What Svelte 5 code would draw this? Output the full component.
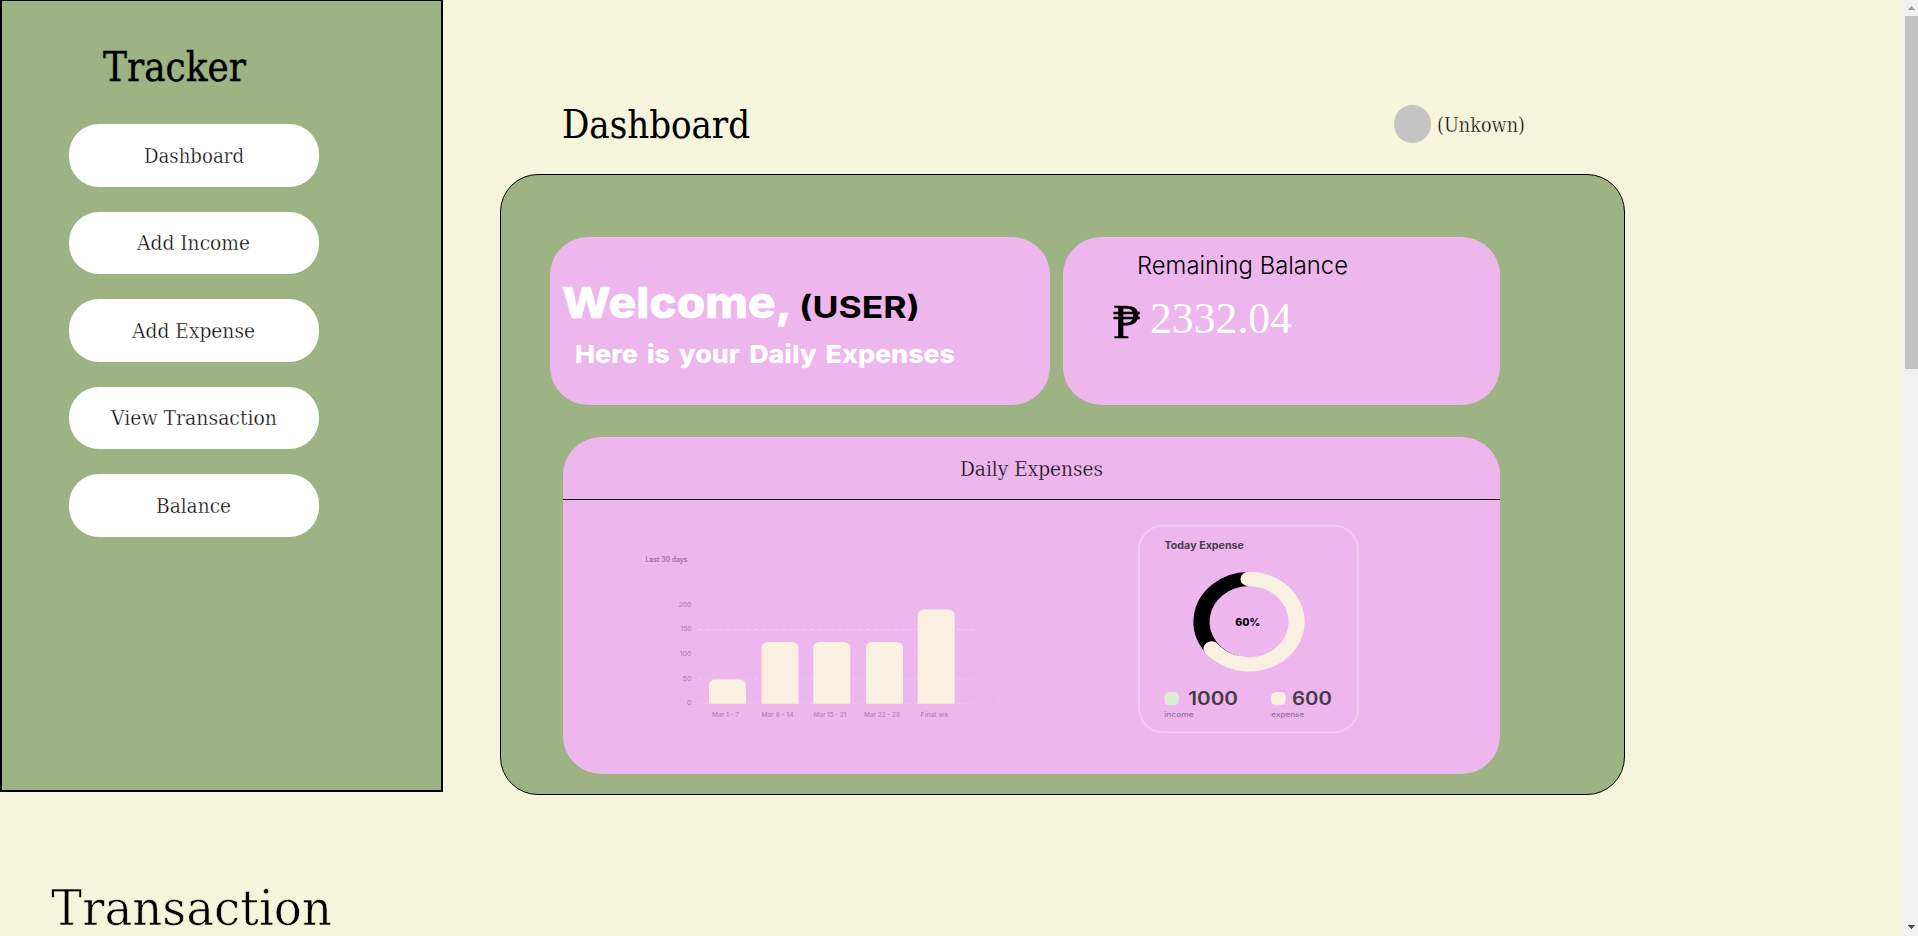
<script>
  const menu = [
    { label: 'Dashboard', width: 100 },
    { label: 'Add Income', width: 113 },
    { label: 'Add Expense', width: 123 },
    { label: 'View Transaction', width: 166 },
    { label: 'Balance', width: 75 }
  ];
  const bars = [
    { label: 'Mar 1 - 7', x: 109, top: 79.5, cx: 125.5, w: 27 },
    { label: 'Mar 8 - 14', x: 161.5, top: 42, cx: 177.5, w: 32 },
    { label: 'Mar 15 - 21', x: 213.3, top: 42, cx: 230, w: 33 },
    { label: 'Mar 22 - 28', x: 266, top: 42, cx: 282, w: 36 },
    { label: 'Final wk', x: 317.7, top: 9.5, cx: 334.5, w: 28 }
  ];
  const ticks = [
    { value: 200, y: 5.5, w: 13, o: 0.12 },
    { value: 150, y: 29.5, w: 11, o: 0.6 },
    { value: 100, y: 54.5, w: 12, o: 0.25 },
    { value: 50, y: 79, w: 9, o: 0.4 },
    { value: 0, y: 103.5, w: 4.5, o: 0.3 }
  ];
</script>

{#snippet line(text, width, size, kind)}
  <svg class="line {kind}" {width} height={size} font-size={size} role="img" aria-label={text}>
    <text x="0" y={size * 0.8} textLength={width} lengthAdjust="spacingAndGlyphs">{text}</text>
  </svg>
{/snippet}

<div class="page">
  <div class="top">
    <aside class="sidebar">
      <h1>{@render line('Tracker', 143, 41, 'slab strong')}</h1>
      <nav>
        {#each menu as item}
          <button>{@render line(item.label, item.width, 19.5, 'slab light on-white')}</button>
        {/each}
      </nav>
    </aside>

    <main>
      <header>
        <h2>{@render line('Dashboard', 188, 39, 'slab mid')}</h2>
        <div class="user">
          <span class="avatar"></span>
          {@render line('(Unkown)', 88, 19.5, 'slab light on-cream')}
        </div>
      </header>

      <section class="board">
        <div class="cards">
          <div class="card welcome">
            <div class="greeting">
              {@render line('Welcome,', 230, 43, 'wide white heavy')}
              {@render line('(USER)', 121, 30, 'wide bold')}
            </div>
            {@render line('Here is your Daily Expenses', 380, 24.5, 'wide white spaced')}
          </div>
          <div class="card balance">
            {@render line('Remaining Balance', 211, 24, 'thin')}
            <div class="amount">
              {@render line('₱', 27, 49, 'peso')}
              {@render line('2332.04', 142, 45, 'times white')}
            </div>
          </div>
        </div>

        <div class="daily">
          <div class="daily-head">{@render line('Daily Expenses', 143, 19.5, 'slab light on-pink')}</div>
          <div class="charts">
            <svg class="bars" width="400" height="190" viewBox="0 -60 400 190">
              <text class="caption" x="45.5" y="-38" textLength="42" lengthAdjust="spacingAndGlyphs">Last 30 days</text>
              {#each ticks as t}
                <text class="tick" x="91.5" y={t.y + 1.7} text-anchor="end" textLength={t.w} lengthAdjust="spacingAndGlyphs">{t.value}</text>
                <line x1="98" x2="378" y1={t.y} y2={t.y} opacity={t.o} />
              {/each}
              {#each bars as b}
                <path class="bar" d="M{b.x} 103.7V{b.top + 6.5}q0-6.5 6.5-6.5h24q6.5 0 6.5 6.5V103.7z" />
                <text class="tick" x={b.cx} y="117" text-anchor="middle" textLength={b.w} lengthAdjust="spacingAndGlyphs">{b.label}</text>
              {/each}
              <path class="edge" d="M26 99q3 13 17 18M399 95q-2 18-22 24" />
            </svg>

            <svg class="donut" width="221" height="208" viewBox="1138.5 525 221 208">
              <rect class="frame" x="1139.5" y="525.8" width="219" height="206.5" rx="24" />
              <text class="title" x="1165" y="548.6" textLength="79.5" lengthAdjust="spacingAndGlyphs">Today Expense</text>
              <g transform="translate(1249 621.7) scale(1.12 1)">
                <path class="ring income" d="M0-42.8A42.8 42.8 0 0 0-10 41.4" />
                <path class="ring expense" d="M0-42.7A42.7 42.7 0 1 1-33 26.8" />
              </g>
              <text class="percent" x="1235.7" y="625.6" textLength="25" lengthAdjust="spacingAndGlyphs">60%</text>
              <rect class="green" x="1165" y="692" width="14.3" height="13.2" rx="4.5" />
              <text class="sum" x="1188.8" y="705" textLength="49.7" lengthAdjust="spacingAndGlyphs">1000</text>
              <text class="name" x="1164.7" y="717.4" textLength="29.6" lengthAdjust="spacingAndGlyphs">income</text>
              <rect class="sand" x="1271.8" y="692" width="14.3" height="13.2" rx="4.5" />
              <text class="sum" x="1292.5" y="705" textLength="39.8" lengthAdjust="spacingAndGlyphs">600</text>
              <text class="name" x="1271.8" y="717.4" textLength="33" lengthAdjust="spacingAndGlyphs">expense</text>
            </svg>
          </div>
        </div>
      </section>
    </main>
  </div>

  <h2 class="transaction">{@render line('Transaction', 281, 49, 'slab thin-slab')}</h2>

  <div class="scroll">
    <svg width="7" height="4"><path d="M3 0h1v1h1v1h1v1h1v1H0V3h1V2h1V1h1z" fill="#a3a3a3" /></svg>
    <div class="thumb"></div>
    <svg class="down" width="7" height="4"><path d="M0 0h7v1H6v1H5v1H4v1H3V3H2V2H1V1H0z" fill="#505050" /></svg>
  </div>
</div>

<style>
  :global(body) { margin: 0; background: #f5f5dc; overflow: hidden; }
  .page { position: relative; width: 1918px; height: 936px; overflow: hidden; background: #f5f5dc; color: #000; }
  h1, h2 { margin: 0; font-weight: 400; display: flex; }
  .top { display: flex; height: 795px; }

  .line { display: block; overflow: visible; flex: none; }
  .slab { font-family: "Roboto Slab", "DejaVu Serif Condensed", "DejaVu Serif", serif; font-weight: 400; }
  .strong { stroke: #000; stroke-width: 0.4px; }
  .mid { stroke: #000; stroke-width: 0.1px; }
  .thin-slab { stroke: #f5f5dc; stroke-width: 0.6px; }
  .light { stroke-width: 0.33px; }
  .on-white { stroke: #fff; }
  .on-cream { stroke: #f5f5dc; }
  .on-pink { stroke: #edb7ed; }
  .wide { font-family: Inter, sans-serif; font-weight: 800; }
  .heavy { stroke: #fff; stroke-width: 0.6px; }
  .bold { font-weight: 700; }
  .spaced { word-spacing: 3px; }
  .white { fill: #fff; }
  .thin { font-family: Inter, sans-serif; font-weight: 300; }
  .times { font-family: "Liberation Serif", serif; }
  .peso { font-family: "Liberation Serif", serif; font-weight: 400; stroke: #000; stroke-width: 0.6px; }

  .sidebar { box-sizing: border-box; width: 443px; height: 793px; margin-top: -1px; border: 2px solid #000; background: #9eb384; flex: none; }
  .sidebar h1 { margin: 47.2px 0 35.1px 101px; }
  nav { display: flex; flex-direction: column; gap: 25px; padding-left: 67px; }
  button { box-sizing: border-box; display: flex; justify-content: center; align-items: center; width: 250px; height: 62.5px; padding: 2px 1px 0 0; border: 0; border-radius: 30px; background: #fff; }

  main { margin-left: 57px; width: 1125px; }
  header { box-sizing: border-box; height: 174px; padding: 105px 100px 0 62px; display: flex; justify-content: space-between; align-items: flex-start; }
  header h2 { padding-top: 2px; }
  .user { display: flex; align-items: center; gap: 6px; }
  .avatar { width: 37px; height: 38px; border-radius: 50%; background: #c4c4c4; }
  .user :global(svg) { margin-top: 4px; }

  .board { box-sizing: border-box; height: 621px; border: 1px solid #000; border-radius: 38px; background: #9eb384; padding: 62px 124px 0 49px; }
  .cards { display: flex; justify-content: space-between; height: 168px; }
  .card { box-sizing: border-box; border-radius: 38px; background: #edb7ed; }
  .welcome { width: 500px; padding: 47px 0 0 12px; display: flex; flex-direction: column; gap: 15.5px; }
  .welcome > :global(svg) { margin-left: 13px; }
  .greeting { display: flex; gap: 7px; }
  .greeting :global(svg:last-child) { margin-top: 10px; }
  .balance { width: 437px; padding: 18px 0 0 50px; }
  .balance > :global(svg) { margin-left: 24px; }
  .amount { display: flex; gap: 10px; margin-top: 18px; }
  .amount :global(svg:first-child) { margin-top: 2px; }

  .daily { width: 937px; height: 337px; margin: 32px 0 0 13px; border-radius: 38px; background: #edb7ed; }
  .daily-head { box-sizing: border-box; height: 63px; border-bottom: 1px solid #000; display: flex; justify-content: center; padding-top: 23px; }
  .charts { display: flex; align-items: flex-start; padding: 25px 0 0 37px; }
  .bars { margin-top: 15px; }
  .donut { margin-left: 138.2px; }
  .bars, .donut { overflow: visible; font-family: Inter, sans-serif; }
  .caption { font-size: 7px; font-weight: 600; fill: #9b739c; }
  .tick { font-size: 6.5px; font-weight: 500; fill: #b088b0; }
  .bars line { stroke: #e8dfe8; stroke-width: 1; stroke-dasharray: 4 3; }
  .bar { fill: #faf0e2; }
  .edge { fill: none; stroke: #e8c5e6; stroke-width: 1; }
  .frame { fill: none; stroke: #f1cdf0; stroke-width: 1.6; }
  .title { font-size: 10px; font-weight: 700; fill: #4a3d4a; }
  .ring { fill: none; stroke-width: 14.4; }
  .income { stroke: #000; }
  .expense { stroke: #faf0e2; stroke-linecap: round; }
  .percent { font-size: 10.5px; font-weight: 800; }
  .green { fill: #dcecd8; }
  .sand { fill: #faf0e2; }
  .sum { font-size: 18px; font-weight: 600; fill: #443c44; }
  .name { font-size: 7px; font-weight: 500; fill: #94709a; }

  .transaction { margin: 91.2px 0 0 51px; }

  .scroll { position: absolute; top: 0; right: 0; width: 15px; height: 936px; background: #f1f1f1; display: flex; flex-direction: column; align-items: center; box-sizing: border-box; padding: 6px 0 7px 1px; }
  .thumb { width: 13px; height: 353px; margin: 6px 0 0 1px; background: #c1c1c1; }
  .down { margin-top: auto; }
</style>
